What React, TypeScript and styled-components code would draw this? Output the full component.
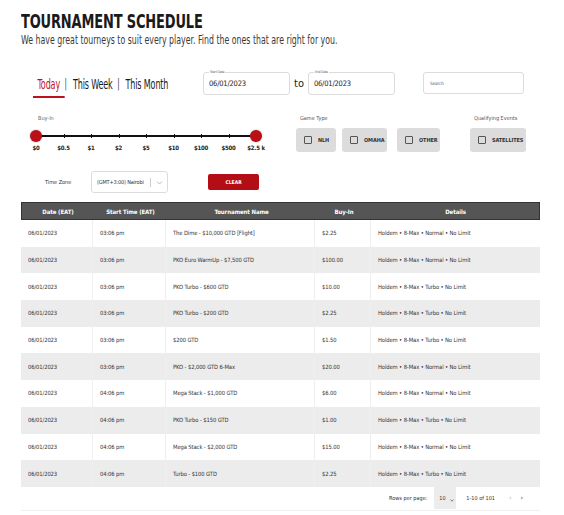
import React from "react";
import styled, { createGlobalStyle } from "styled-components";

const Global = createGlobalStyle`
  html, body { margin: 0; padding: 0; background: #fff; }
  body { font-family: "DejaVu Sans Condensed", "DejaVu Sans", sans-serif; color: #222; }
  * { box-sizing: border-box; }
`;

const Page = styled.div`
  width: 564px;
  padding: 10px 24px 0 21px;
`;

const Header = styled.div`
  display: flex;
  flex-direction: column;
  align-items: flex-start;
`;

const Title = styled.h1`
  margin: 0;
  font-size: 19px;
  line-height: 22px;
  font-weight: 700;
  letter-spacing: -0.2px;
  color: #1a1a1a;
  transform: scaleX(0.76);
  transform-origin: left center;
  white-space: nowrap;
`;

const Subtitle = styled.p`
  margin: 0;
  font-size: 13px;
  line-height: 16px;
  color: #3a3a3a;
  transform: scaleX(0.67);
  transform-origin: left center;
  white-space: nowrap;
`;

const FilterRow = styled.div`
  display: flex;
  align-items: center;
  margin-top: 23px;
  height: 24px;
`;

const TabsWrap = styled.div`
  width: 170px;
  margin-left: 12px;
  overflow: visible;
`;

const Tabs = styled.div`
  display: flex;
  align-items: center;
  transform: scaleX(0.66);
  transform-origin: left center;
  white-space: nowrap;
  margin-top: 5px;
`;

const Tab = styled.span<{ $active?: boolean }>`
  font-size: 13.5px;
  padding: 2px 7px 4px;
  letter-spacing: -0.2px;
  color: ${(p) => (p.$active ? "#c0101c" : "#1a1a1a")};
  border-bottom: 2px solid ${(p) => (p.$active ? "#c0101c" : "transparent")};
`;

const Sep = styled.span`
  font-size: 12px;
  color: #333;
  margin: 0 2px 0 0;
  padding-bottom: 3px;
`;

const DateField = styled.div`
  position: relative;
  width: 87px;
  height: 23px;
  border: 1px solid #dcdcdc;
  border-radius: 3px;
  display: flex;
  align-items: center;
  padding-left: 5px;
  font-size: 7.5px;
  letter-spacing: -0.2px;
  color: #222;
`;

const FieldLabel = styled.span`
  position: absolute;
  top: -3px;
  left: 5px;
  background: #fff;
  padding: 0 1px;
  font-size: 3.5px;
  line-height: 5px;
  color: #666;
`;

const To = styled.span`
  font-size: 11px;
  margin: 0 4px 0 4px;
  color: #222;
`;

const Search = styled.div`
  margin-left: 28px;
  width: 101px;
  height: 22px;
  border: 1px solid #dcdcdc;
  border-radius: 3px;
  display: flex;
  align-items: center;
  padding-left: 6px;
  font-size: 4.5px;
  color: #555;
`;

const Row2 = styled.div`
  display: flex;
  margin-top: 19px;
`;

const SliderBlock = styled.div`
  width: 275px;
  padding-left: 15px;
`;

const SmallLabel = styled.div`
  font-size: 5.5px;
  color: #666;
  line-height: 8px;
  margin: 0 0 13px 2px;
`;

const Track = styled.div`
  position: relative;
  width: 220px;
  height: 2px;
  background: #111;
`;

const Tick = styled.span`
  position: absolute;
  top: -1px;
  width: 1px;
  height: 4px;
  background: #111;
`;

const Thumb = styled.span`
  position: absolute;
  top: -5px;
  width: 12px;
  height: 12px;
  margin-left: -6px;
  border-radius: 50%;
  background: #b90f18;
  box-shadow: 0 0 2px rgba(0,0,0,0.35);
`;

const TickLabels = styled.div`
  position: relative;
  height: 12px;
  width: 220px;
  margin-top: 7px;
`;

const TickLabel = styled.span`
  position: absolute;
  transform: translateX(-50%);
  font-size: 6px;
  font-weight: 700;
  letter-spacing: -0.2px;
  color: #222;
  white-space: nowrap;
`;

const GroupBlock = styled.div<{ $ml: number }>`
  margin-left: ${(p) => p.$ml}px;
  display: flex;
  flex-direction: column;
`;

const GroupLabel = styled.div`
  font-size: 5.5px;
  color: #555;
  line-height: 8px;
  margin: 0 0 6px 4px;
`;

const Buttons = styled.div`
  display: flex;
  gap: 6px;
`;

const CheckButton = styled.div<{ $w: number; $gap?: number }>`
  width: ${(p) => p.$w}px;
  height: 24px;
  margin-right: ${(p) => p.$gap ?? 0}px;
  background: #dcdcdc;
  border-radius: 3px;
  display: flex;
  align-items: center;
  padding-left: 8px;
  font-size: 5.5px;
  font-weight: 700;
  letter-spacing: -0.1px;
  color: #333;
  white-space: nowrap;
`;

const Box = styled.span`
  flex: none;
  width: 8px;
  height: 8px;
  border: 1px solid #555;
  border-radius: 1px;
  margin-right: 6px;
`;

const Row3 = styled.div`
  display: flex;
  align-items: center;
  margin-top: 15px;
  height: 22px;
`;

const TZLabel = styled.span`
  font-size: 5.5px;
  color: #333;
  margin-left: 24px;
  width: 46px;
`;

const Select = styled.div`
  width: 77px;
  height: 22px;
  border: 1px solid #dcdcdc;
  border-radius: 3px;
  display: flex;
  align-items: center;
  padding-left: 5px;
  font-size: 5.5px;
  letter-spacing: -0.15px;
  color: #333;
  white-space: nowrap;
`;

const SelDivider = styled.span`
  width: 1px;
  height: 9px;
  background: #ccc;
  margin: 0 5px 0 6px;
`;

const ClearButton = styled.button`
  margin-left: 40px;
  width: 51px;
  height: 16px;
  border: 0;
  border-radius: 2px;
  background: #b30d16;
  color: #fff;
  font-family: inherit;
  font-size: 5px;
  font-weight: 700;
  padding: 0;
`;

const Table = styled.div`
  margin-top: 9px;
  width: 519px;
`;

const cols = "72px 73px 149px 56px 1fr";

const HeadRow = styled.div`
  display: grid;
  grid-template-columns: ${cols};
  height: 18px;
  background: #555;
  border: 1px solid #333;
  align-items: center;
`;

const HeadCell = styled.div`
  text-align: center;
  color: #fff;
  font-size: 6px;
  font-weight: 700;
  letter-spacing: -0.1px;
`;

const BodyRow = styled.div<{ $alt: boolean }>`
  display: grid;
  grid-template-columns: ${cols};
  height: 26.7px;
  background: ${(p) => (p.$alt ? "#ececec" : "#fff")};
`;

const Cell = styled.div<{ $last?: boolean }>`
  display: flex;
  align-items: center;
  padding-left: 7px;
  font-size: 5.8px;
  letter-spacing: -0.1px;
  color: #333;
  white-space: nowrap;
  border-right: ${(p) => (p.$last ? "0" : "1px solid #efefef")};
`;

const Pager = styled.div`
  display: flex;
  align-items: center;
  justify-content: flex-end;
  height: 24px;
  border-bottom: 1px solid #f0f0f0;
  font-size: 5.5px;
  color: #333;
  padding-right: 17px;
`;

const PageSelect = styled.div`
  margin-left: 7px;
  width: 22px;
  height: 22px;
  background: #ececec;
  display: flex;
  align-items: center;
  padding-left: 5px;
  gap: 4px;
`;

const Range = styled.span`
  margin-left: 10px;
`;

const Arrow = styled.span<{ $dim?: boolean }>`
  margin-left: ${(p) => (p.$dim ? 14 : 9)}px;
  color: ${(p) => (p.$dim ? "#aaa" : "#333")};
  font-size: 7px;
`;

const ticks = ["$0", "$0.5", "$1", "$2", "$5", "$10", "$100", "$500", "$2.5 k"];

const rows = [
  ["06/01/2023", "03:06 pm", "The Dime - $10,000 GTD [Flight]", "$2.25", "Holdem • 8-Max • Normal • No Limit"],
  ["06/01/2023", "03:06 pm", "PKO Euro WarmUp - $7,500 GTD", "$100.00", "Holdem • 8-Max • Normal • No Limit"],
  ["06/01/2023", "03:06 pm", "PKO Turbo - $600 GTD", "$10.00", "Holdem • 8-Max • Turbo • No Limit"],
  ["06/01/2023", "03:06 pm", "PKO Turbo - $200 GTD", "$2.25", "Holdem • 8-Max • Turbo • No Limit"],
  ["06/01/2023", "03:06 pm", "$200 GTD", "$1.50", "Holdem • 8-Max • Turbo • No Limit"],
  ["06/01/2023", "03:06 pm", "PKO - $2,000 GTD 6-Max", "$20.00", "Holdem • 8-Max • Normal • No Limit"],
  ["06/01/2023", "04:06 pm", "Mega Stack - $1,000 GTD", "$6.00", "Holdem • 8-Max • Normal • No Limit"],
  ["06/01/2023", "04:06 pm", "PKO Turbo - $150 GTD", "$1.00", "Holdem • 8-Max • Turbo • No Limit"],
  ["06/01/2023", "04:06 pm", "Mega Stack - $2,000 GTD", "$15.00", "Holdem • 8-Max • Normal • No Limit"],
  ["06/01/2023", "04:06 pm", "Turbo - $100 GTD", "$2.25", "Holdem • 8-Max • Turbo • No Limit"],
];

export default function App() {
  return (
    <Page>
      <Global />
      <Header>
        <Title>TOURNAMENT SCHEDULE</Title>
        <Subtitle>We have great tourneys to suit every player. Find the ones that are right for you.</Subtitle>
      </Header>

      <FilterRow>
        <TabsWrap>
          <Tabs>
            <Tab $active>Today</Tab>
            <Sep>|</Sep>
            <Tab>This Week</Tab>
            <Sep>|</Sep>
            <Tab>This Month</Tab>
          </Tabs>
        </TabsWrap>
        <DateField>
          <FieldLabel>Start Date</FieldLabel>
          06/01/2023
        </DateField>
        <To>to</To>
        <DateField>
          <FieldLabel>End Date</FieldLabel>
          06/01/2023
        </DateField>
        <Search>Search</Search>
      </FilterRow>

      <Row2>
        <SliderBlock>
          <SmallLabel>Buy-In</SmallLabel>
          <Track>
            {ticks.map((_, i) => (
              <Tick key={i} style={{ left: `${(i * 220) / 8}px` }} />
            ))}
            <Thumb style={{ left: 0 }} />
            <Thumb style={{ left: "220px" }} />
          </Track>
          <TickLabels>
            {ticks.map((t, i) => (
              <TickLabel key={t} style={{ left: `${(i * 220) / 8}px` }}>{t}</TickLabel>
            ))}
          </TickLabels>
        </SliderBlock>
        <GroupBlock $ml={0}>
          <GroupLabel>Game Type</GroupLabel>
          <Buttons>
            <CheckButton $w={40}><Box />NLH</CheckButton>
            <CheckButton $w={45} $gap={4}><Box />OMAHA</CheckButton>
            <CheckButton $w={43}><Box />OTHER</CheckButton>
          </Buttons>
        </GroupBlock>
        <GroupBlock $ml={30}>
          <GroupLabel>Qualifying Events</GroupLabel>
          <CheckButton $w={56}><Box />SATELLITES</CheckButton>
        </GroupBlock>
      </Row2>

      <Row3>
        <TZLabel>Time Zone</TZLabel>
        <Select>
          (GMT+3:00) Nairobi
          <SelDivider />
          <svg width="7" height="5" viewBox="0 0 7 5">
            <path d="M1 1.5 L3.5 4 L6 1.5" fill="none" stroke="#aaa" strokeWidth="0.8" />
          </svg>
        </Select>
        <ClearButton>CLEAR</ClearButton>
      </Row3>

      <Table>
        <HeadRow>
          <HeadCell>Date (EAT)</HeadCell>
          <HeadCell>Start Time (EAT)</HeadCell>
          <HeadCell>Tournament Name</HeadCell>
          <HeadCell>Buy-In</HeadCell>
          <HeadCell>Details</HeadCell>
        </HeadRow>
        {rows.map((r, i) => (
          <BodyRow key={i} $alt={i % 2 === 1}>
            {r.map((c, j) => (
              <Cell key={j} $last={j === 4}>{c}</Cell>
            ))}
          </BodyRow>
        ))}
        <Pager>
          Rows per page:
          <PageSelect>
            10
            <svg width="4" height="3" viewBox="0 0 4 3" style={{ marginTop: 5 }}>
              <path d="M0.5 0.5 L2 2.3 L3.5 0.5" fill="none" stroke="#555" strokeWidth="0.7" />
            </svg>
          </PageSelect>
          <Range>1-10 of 101</Range>
          <Arrow $dim>‹</Arrow>
          <Arrow>›</Arrow>
        </Pager>
      </Table>
    </Page>
  );
}
